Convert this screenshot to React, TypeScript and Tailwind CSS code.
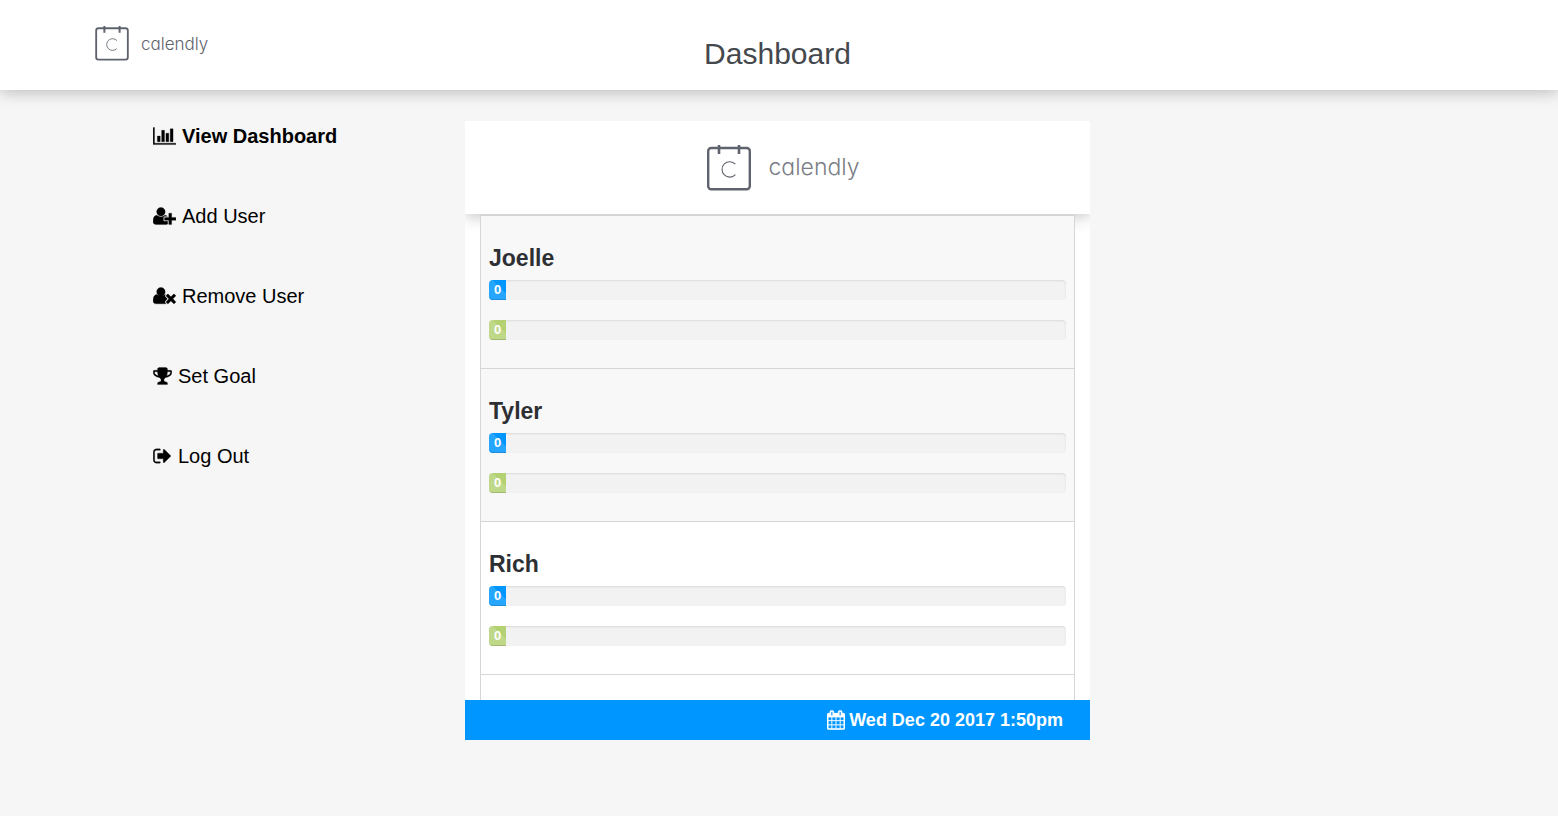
import React from "react";

type IconProps = { d: string; viewBox: string; className: string };

function Icon({ d, viewBox, className }: IconProps) {
  return (
    <svg
      viewBox={viewBox}
      className={className}
      fill="currentColor"
      stroke="currentColor"
      strokeWidth="24"
      aria-hidden="true"
    >
      <path d={d} />
    </svg>
  );
}

const WIDE = "0 0 2048 1792";
const NARROW = "64 0 1664 1792";

const BAR_CHART =
  "M640 896v512h-256v-512h256zm384-512v1024h-256v-1024h256zm1024 1152v128h-2048v-1536h128v1408h1920zm-640-896v768h-256v-768h256zm384-384v1152h-256v-1152h256z";
const USER_PLUS =
  "M704 896q-159 0-271.5-112.5t-112.5-271.5 112.5-271.5 271.5-112.5 271.5 112.5 112.5 271.5-112.5 271.5-271.5 112.5zm960 128h352q13 0 22.5 9.5t9.5 22.5v192q0 13-9.5 22.5t-22.5 9.5h-352v352q0 13-9.5 22.5t-22.5 9.5h-192q-13 0-22.5-9.5t-9.5-22.5v-352h-352q-13 0-22.5-9.5t-9.5-22.5v-192q0-13 9.5-22.5t22.5-9.5h352v-352q0-13 9.5-22.5t22.5-9.5h192q13 0 22.5 9.5t9.5 22.5v352zm-736 224q0 52 38 90t90 38h256v238q-68 50-171 50h-874q-121 0-194-69t-73-190q0-53 3.5-103.5t14-109 26.5-108.5 43-97.5 62-81 85.5-53.5 111.5-20q19 0 39 17 79 61 154.5 91.5t164.5 30.5 164.5-30.5 154.5-91.5q20-17 39-17 132 0 217 96h-223q-52 0-90 38t-38 90v192z";
const USER_TIMES =
  "M704 896q-159 0-271.5-112.5t-112.5-271.5 112.5-271.5 271.5-112.5 271.5 112.5 112.5 271.5-112.5 271.5-271.5 112.5zm1077 256l249 249q9 9 9 23 0 13-9 22l-136 136q-9 9-22 9-14 0-23-9l-249-249-249 249q-9 9-23 9-13 0-22-9l-136-136q-9-9-9-22 0-14 9-23l249-249-249-249q-9-9-9-23 0-13 9-22l136-136q9-9 22-9 14 0 23 9l249 249 249-249q9-9 23-9 13 0 22 9l136 136q9 9 9 22 0 14-9 23zm-498 0l-181 181q-37 37-37 91 0 53 37 90l83 83q-21 3-44 3h-874q-121 0-194-69t-73-190q0-53 3.5-103.5t14-109 26.5-108.5 43-97.5 62-81 85.5-53.5 111.5-20q19 0 39 17 154 122 319 122t319-122q20-17 39-17 28 0 57 6-28 27-41 50t-13 56q0 54 37 91z";
const TROPHY =
  "M522 883q-74-162-74-371h-256v96q0 78 94.5 162t235.5 113zm1078-275v-96h-256q0 209-74 371 141-29 235.5-113t94.5-162zm128-128v128q0 71-41.5 143t-112 130-173 97.5-215.5 44.5q-42 54-95 95-38 34-52.5 72.5t-14.5 89.5q0 54 30.5 91t97.5 37q75 0 133.5 45.5t58.5 114.5v64q0 14-9 23t-23 9h-832q-14 0-23-9t-9-23v-64q0-69 58.5-114.5t133.5-45.5q67 0 97.5-37t30.5-91q0-51-14.5-89.5t-52.5-72.5q-53-41-95-95-113-5-215.5-44.5t-173-97.5-112-130-41.5-143v-128q0-40 28-68t68-28h288v-96q0-66 47-113t113-47h576q66 0 113 47t47 113v96h288q40 0 68 28t28 68z";
const SIGN_OUT =
  "M704 1440q0 4 1 20t.5 26.5-3 23.5-10 19.5-20.5 6.5h-320q-119 0-203.5-84.5t-84.5-203.5v-704q0-119 84.5-203.5t203.5-84.5h320q13 0 22.5 9.5t9.5 22.5q0 4 1 20t.5 26.5-3 23.5-10 19.5-20.5 6.5h-320q-66 0-113 47t-47 113v704q0 66 47 113t113 47h312l11.5 1 11.5 3 8 5.5 7 9 2 13.5zm928-544q0 26-19 45l-544 544q-19 19-45 19t-45-19-19-45v-288h-448q-26 0-45-19t-19-45v-384q0-26 19-45t45-19h448v-288q0-26 19-45t45-19 45 19l544 544q19 19 19 45z";
const CALENDAR =
  "M192 1664h288v-288h-288v288zm352 0h320v-288h-320v288zm-352-352h288v-320h-288v320zm352 0h320v-320h-320v320zm-352-384h288v-288h-288v288zm736 736h320v-288h-320v288zm-384-736h320v-288h-320v288zm768 736h288v-288h-288v288zm-384-352h320v-320h-320v320zm-352-864v-288q0-13-9.5-22.5t-22.5-9.5h-64q-13 0-22.5 9.5t-9.5 22.5v288q0 13 9.5 22.5t22.5 9.5h64q13 0 22.5-9.5t9.5-22.5zm736 864h288v-320h-288v320zm-384-384h320v-288h-320v288zm384 0h288v-288h-288v288zm32-480v-288q0-13-9.5-22.5t-22.5-9.5h-64q-13 0-22.5 9.5t-9.5 22.5v288q0 13 9.5 22.5t22.5 9.5h64q13 0 22.5-9.5t9.5-22.5zm384-64v1280q0 52-38 90t-90 38h-1408q-52 0-90-38t-38-90v-1280q0-52 38-90t90-38h128v-96q0-66 47-113t113-47h64q66 0 113 47t47 113v96h384v-96q0-66 47-113t113-47h64q66 0 113 47t47 113v96h128q52 0 90 38t38 90z";

function LogoMark({ className }: { className: string }) {
  return (
    <svg viewBox="0 0 44 46" className={className} fill="none" stroke="#5f636d" aria-hidden="true">
      <rect x="1.2" y="3" width="41.6" height="41.2" rx="3" strokeWidth="2.4" />
      <path d="M12 0v9M32 0v9" strokeWidth="2.6" />
      <path d="M28.4 19.2a7.7 7.7 0 1 0 0 10.4" strokeWidth="1.1" />
    </svg>
  );
}

const nav = [
  { label: "View Dashboard", d: BAR_CHART, wide: true, active: true },
  { label: "Add User", d: USER_PLUS, wide: true, active: false },
  { label: "Remove User", d: USER_TIMES, wide: true, active: false },
  { label: "Set Goal", d: TROPHY, wide: false, active: false },
  { label: "Log Out", d: SIGN_OUT, wide: false, active: false },
];

const people = [
  { name: "Joelle", first: 0, second: 0, shaded: true },
  { name: "Tyler", first: 0, second: 0, shaded: true },
  { name: "Rich", first: 0, second: 0, shaded: false },
];

function Bar({ value, label, color }: { value: number; label: string; color: string }) {
  return (
    <div
      role="progressbar"
      aria-label={label}
      aria-valuenow={value}
      className="mb-5 h-5 overflow-hidden rounded bg-[#f2f2f2] shadow-[inset_0_1px_2px_rgba(0,0,0,0.1)]"
    >
      <div
        className={
          "h-full min-w-[17px] bg-[linear-gradient(45deg,rgba(255,255,255,0.15)_25%,transparent_25%,transparent_50%,rgba(255,255,255,0.15)_50%,rgba(255,255,255,0.15)_75%,transparent_75%)] bg-[length:40px_40px] bg-[position:-16px_0] text-center text-[13px] leading-5 font-bold text-white shadow-[inset_0_-1px_0_rgba(0,0,0,0.15)] " +
          color
        }
        style={{ width: `${value}%` }}
      >
        {value}
      </div>
    </div>
  );
}

export default function App() {
  return (
    <div className="min-h-screen bg-[#f6f6f6] font-['Liberation_Sans',Arial,sans-serif] text-black">
      <header className="grid h-[90px] grid-cols-[465fr_625fr_468fr] bg-white shadow-[0_2px_15px_rgba(0,0,0,0.25)]">
        <a href="#home" className="flex items-start pt-[26px] pl-[95px] text-[#5f636d]">
          <LogoMark className="h-[35px] w-[34px]" />
          <span className="ml-3 pt-1.5 font-['Inter',sans-serif] text-[17px] leading-6 font-light [font-feature-settings:'cv11']">
            calendly
          </span>
        </a>
        <h1 className="pt-9 text-center text-3xl leading-9 text-[#45484d]">Dashboard</h1>
      </header>

      <div className="grid grid-cols-[465fr_625fr_468fr] pt-[31px]">
        <nav className="pl-[153px]">
          <ul className="flex flex-col gap-[50px]">
            {nav.map((item) => (
              <li key={item.label}>
                <a
                  href="#view"
                  className={
                    item.active
                      ? "flex items-center gap-1.5 text-xl leading-[30px] font-bold"
                      : "flex items-center gap-1.5 text-xl leading-[30px]"
                  }
                >
                  <Icon
                    d={item.d}
                    viewBox={item.wide ? WIDE : NARROW}
                    className={item.wide ? "h-5 w-[23px]" : "h-5 w-[19px]"}
                  />
                  {item.label}
                </a>
              </li>
            ))}
          </ul>
        </nav>

        <main className="bg-white">
          <div className="flex h-[93px] items-start justify-center bg-white pt-6 pl-3 text-[#7a7d86] shadow-[0_2px_15px_rgba(0,0,0,0.25)] [clip-path:inset(0_0_-30px_0)]">
            <LogoMark className="h-[46px] w-[44px]" />
            <span className="ml-[17px] pt-1.5 font-['Inter',sans-serif] text-[23px] leading-8 font-light [font-feature-settings:'cv11']">
              calendly
            </span>
          </div>

          <div className="relative h-[486px] overflow-hidden px-[15px]">
            <table className="w-full border-separate border-spacing-0 border-x border-t-2 border-[#d6d6d6]">
              <tbody>
                {people.map((p) => (
                  <tr key={p.name} className={p.shaded ? "bg-[#f8f8f8]" : "bg-white"}>
                    <td className="border-b border-[#d6d6d6] px-2 pt-[29px] pb-2">
                      <h3 className="mb-[9px] text-[23px] leading-[26px] font-bold text-[#2d2f33]">
                        {p.name}
                      </h3>
                      <Bar value={p.first} label={`${p.name} first total`} color="bg-[#0096ff]" />
                      <Bar value={p.second} label={`${p.name} second total`} color="bg-[#b4d273]" />
                    </td>
                  </tr>
                ))}
                <tr className="bg-white">
                  <td className="h-[152px]" />
                </tr>
              </tbody>
            </table>
          </div>

          <footer className="flex h-10 items-center justify-end gap-1 bg-[#0096ff] pr-[27px] text-lg font-bold text-white">
            <Icon d={CALENDAR} viewBox={NARROW} className="h-5 w-[18px]" />
            Wed Dec 20 2017 1:50pm
          </footer>
        </main>
      </div>
    </div>
  );
}
